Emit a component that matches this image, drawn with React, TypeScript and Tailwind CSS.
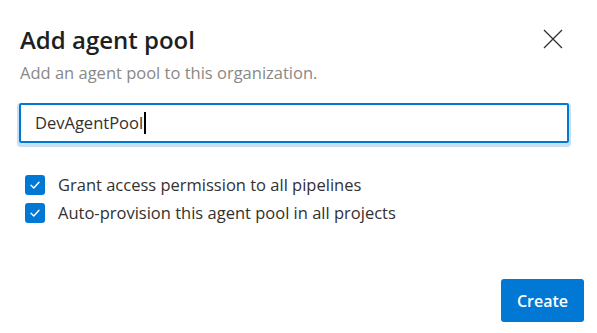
import { useState } from "react";

const font = { fontFamily: '"Open Sans", "Noto Sans", "Liberation Sans", sans-serif' };

function CheckRow({ label }: { label: string }) {
  const [checked, setChecked] = useState(true);
  return (
    <label className="flex items-center gap-[13px] h-[28px] cursor-pointer">
      <button
        type="button"
        onClick={() => setChecked(!checked)}
        className={`w-[20px] h-[20px] rounded-[3px] flex items-center justify-center ${
          checked ? "bg-[#0078d4]" : "border border-[#605e5c] bg-white"
        }`}
      >
        {checked && (
          <svg width="12" height="12" viewBox="0 0 12 12" fill="none">
            <path d="M2 6.3 L4.8 9 L10 3.2" stroke="white" strokeWidth="1.4" strokeLinecap="round" strokeLinejoin="round" />
          </svg>
        )}
      </button>
      <span className="text-[16.5px] text-[#323130]">{label}</span>
    </label>
  );
}

export default function App() {
  return (
    <div className="w-[597px] h-[333px] bg-white relative flex flex-col" style={font}>
      <div className="flex items-start justify-between pl-[20px] pr-[34px] pt-[24px]">
        <h1 className="text-[24px] font-semibold text-[#201f1e] leading-[32px]">Add agent pool</h1>
        <button type="button" className="mt-[5px] w-[20px] h-[20px] flex items-center justify-center">
          <svg width="20" height="20" viewBox="0 0 20 20" fill="none">
            <path d="M1 1 L19 19 M19 1 L1 19" stroke="#323130" strokeWidth="1.3" />
          </svg>
        </button>
      </div>
      <p className="pl-[20px] mt-[6px] text-[16.5px] text-[#8a8886] leading-[22px]">
        Add an agent pool to this organization.
      </p>
      <div className="pl-[19px] pr-[28px] mt-[19px]">
        <div className="h-[40px] border-2 border-[#0078d4] rounded-[2px] shadow-[0_2px_0_2px_#c7e0f4] flex items-center pl-[14px] text-[16.5px] text-[#323130]">
          DevAgentPool
          <span className="inline-block w-[1.5px] h-[22px] bg-black ml-[1px]" />
        </div>
      </div>
      <div className="pl-[25px] mt-[28px] flex flex-col">
        <CheckRow label="Grant access permission to all pipelines" />
        <CheckRow label="Auto-provision this agent pool in all projects" />
      </div>
      <div className="flex-1" />
      <div className="flex justify-end pr-[13px] pb-[11px]">
        <button
          type="button"
          className="w-[83px] h-[43px] bg-[#0078d4] text-white rounded-[3px] text-[16px] font-semibold"
        >
          Create
        </button>
      </div>
    </div>
  );
}
